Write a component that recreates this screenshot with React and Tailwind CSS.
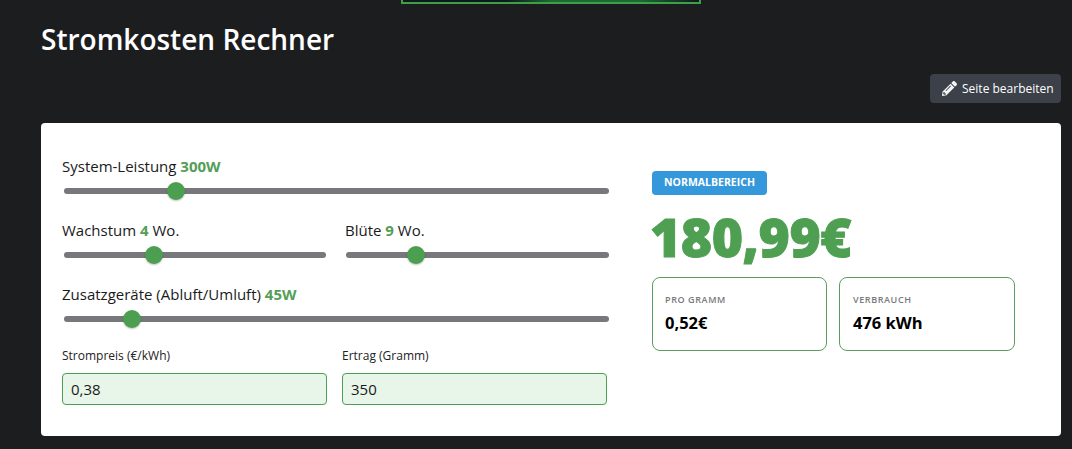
import React from "react";
import { FaPencilAlt } from "react-icons/fa";

function Slider({ pct, className = "" }) {
  return (
    <div className={"relative h-[6px] rounded-full bg-[#76787b] " + className}>
      <div
        className="absolute top-1/2 h-[18px] w-[18px] -translate-x-1/2 -translate-y-1/2 rounded-full bg-[#4c9f50] shadow-[0_1px_2px_rgba(0,0,0,0.25)]"
        style={{ left: pct + "%" }}
      />
    </div>
  );
}

function Label({ children }) {
  return <div className="text-[15px] leading-[20px] text-[#1a1a1a]">{children}</div>;
}

function Val({ children }) {
  return <span className="font-bold text-[#549e58]">{children}</span>;
}

function Field({ label, value }) {
  return (
    <div className="flex flex-col">
      <div className="text-[12px] leading-[16px] text-[#222]">{label}</div>
      <div className="mt-[9px] flex h-[32px] items-center rounded-[4px] border border-[#4c9f50] bg-[#e8f5e9] px-[8px] text-[15px] text-[#1a1a1a]">
        {value}
      </div>
    </div>
  );
}

function Stat({ label, value, className }) {
  return (
    <div className={"flex h-[74px] flex-col rounded-[8px] border border-[#5d9c60] pt-[16px] " + className}>
      <div className="text-[9px] leading-[12px] font-semibold tracking-[0.6px] text-[#77797b]">{label}</div>
      <div className="mt-[6px] text-[16.5px] leading-[22px] font-bold text-black">{value}</div>
    </div>
  );
}

export default function App() {
  return (
    <div className="h-[449px] overflow-hidden bg-[#1b1d1f] pr-[11px] pl-[41px] font-['Open_Sans',sans-serif]">
      <div className="mx-auto h-[4px] w-[300px] border-x-2 border-b-2 border-[#3f9f48] bg-[linear-gradient(90deg,#10181c_0%,#10181c_35%,#1c6a34_50%,#1c6a34_80%,#10181c_100%)]" />
      <h1 className="mt-[17px] text-[28px] leading-[36px] font-semibold text-white">Stromkosten Rechner</h1>
      <div className="mt-[17px] flex justify-end">
        <button className="flex h-[29px] w-[131px] items-center gap-[5px] rounded-[4px] bg-[#3c4048] pl-[12px] text-[12px] text-white">
          <FaPencilAlt className="h-[15px] w-[15px] text-[#f4f5f6]" />
          Seite bearbeiten
        </button>
      </div>
      <div className="mt-[20px] flex h-[313px] rounded-[4px] bg-white pt-[33px] pl-[21px]">
        <div className="w-[548px]">
          <Label>System-Leistung <Val>300W</Val></Label>
          <Slider pct={20.5} className="mt-[12px] ml-[2px] w-[545px]" />
          <div className="mt-[26px] grid grid-cols-[264px_264px] gap-x-[19px]">
            <div>
              <Label>Wachstum <Val>4</Val> Wo.</Label>
              <Slider pct={34.2} className="mt-[12px] ml-[2px] w-[262px]" />
            </div>
            <div>
              <Label>Blüte <Val>9</Val> Wo.</Label>
              <Slider pct={26.7} className="mt-[12px] ml-[1px] w-[263px]" />
            </div>
          </div>
          <div className="mt-[26px]">
            <Label>Zusatzgeräte (Abluft/Umluft) <Val>45W</Val></Label>
            <Slider pct={12.4} className="mt-[12px] ml-[2px] w-[545px]" />
          </div>
          <div className="mt-[26px] grid grid-cols-[265px_265px] gap-x-[15px]">
            <Field label="Strompreis (€/kWh)" value="0,38" />
            <Field label="Ertrag (Gramm)" value="350" />
          </div>
        </div>
        <div className="ml-[42px] flex flex-col items-start pt-[15px]">
          <div className="flex h-[24px] w-[115px] items-center justify-center rounded-[4px] bg-[#3498db] text-[10.5px] font-bold text-white">
            NORMALBEREICH
          </div>
          <div className="mt-[10px] -ml-[2px] text-[53.5px] leading-[64px] font-extrabold tracking-[-0.5px] text-[#4f9f53] [-webkit-text-stroke:1px_#4f9f53]">180,99€</div>
          <div className="mt-[8px] flex gap-[12px]">
            <Stat label="PRO GRAMM" value="0,52€" className="w-[175px] pl-[12px]" />
            <Stat label="VERBRAUCH" value="476 kWh" className="w-[176px] pl-[13px]" />
          </div>
        </div>
      </div>
    </div>
  );
}
